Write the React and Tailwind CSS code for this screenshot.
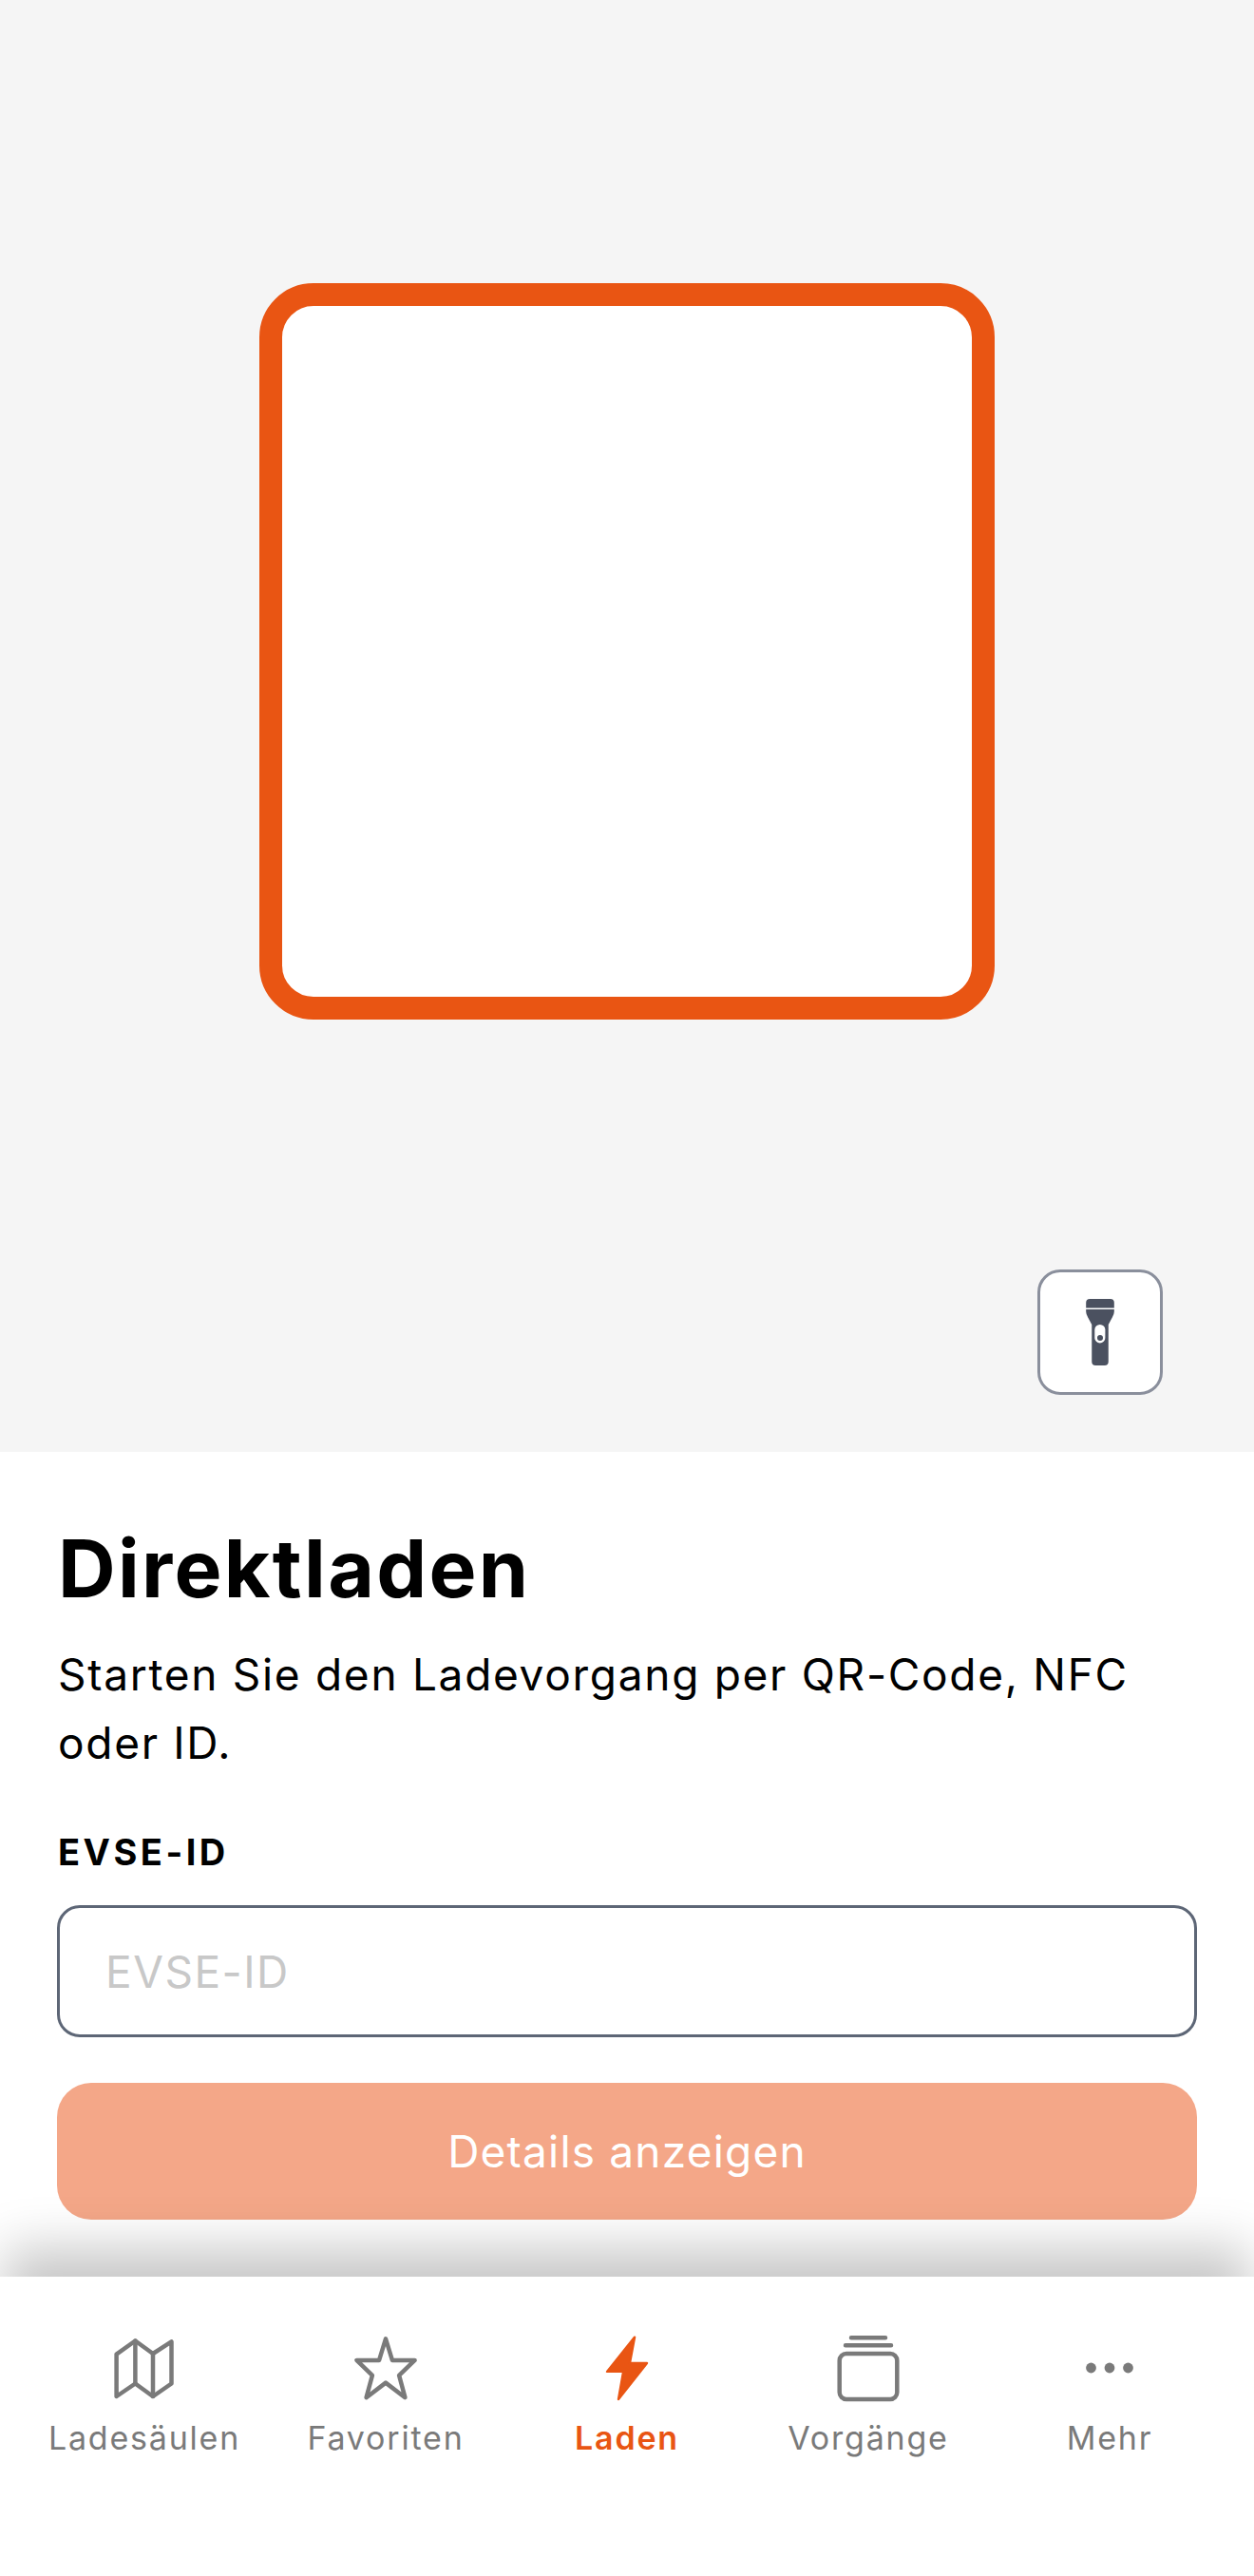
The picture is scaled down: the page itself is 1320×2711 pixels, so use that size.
function MapIcon() {
  return (
    <svg width="72" height="72" viewBox="0 0 24 24" fill="none" stroke="#7a7a7a" strokeWidth="1.5" strokeLinejoin="round" strokeLinecap="round">
      <path d="M2.2 7.2 L8.8 2.5 L15 7 L21.5 2.8 V17.5 L15 22 L8.8 17.5 L2.2 22 Z" />
      <path d="M8.8 2.5 V17.5 M15 7 V22" />
    </svg>
  )
}

function StarIcon() {
  return (
    <svg width="72" height="72" viewBox="0 0 24 24" fill="none" stroke="#7a7a7a" strokeWidth="1.5" strokeLinejoin="round">
      <path d="M12 1.8 L14.3 9.3 L22.2 9.3 L16.7 14.6 L18.8 22.4 L12 17.2 L5.2 22.4 L7.3 14.6 L1.8 9.3 L9.7 9.3 Z" />
    </svg>
  )
}

function BoltIcon() {
  return (
    <svg width="72" height="72" viewBox="0 0 24 24" fill="#e95513" stroke="#e95513" strokeWidth="0.8" strokeLinejoin="round">
      <path d="M14.7 1.2 L5 13.3 L10.7 13.3 L9 23 L19 10.3 L13 10.3 Z" />
    </svg>
  )
}

function StackIcon() {
  return (
    <svg width="72" height="72" viewBox="0 0 24 24" fill="none" stroke="#7a7a7a" strokeWidth="1.5" strokeLinecap="round">
      <rect x="1.9" y="7" width="20.2" height="16" rx="2.4" />
      <path d="M6 1.4 H18 M4 4.1 H20" />
    </svg>
  )
}

function DotsIcon() {
  return (
    <svg width="72" height="72" viewBox="0 0 24 24" fill="#7a7a7a">
      <circle cx="5.5" cy="12" r="1.8" />
      <circle cx="12" cy="12" r="1.8" />
      <circle cx="18.5" cy="12" r="1.8" />
    </svg>
  )
}

function FlashlightIcon() {
  return (
    <svg width="30" height="70" viewBox="0 0 88 208" fill="#4b5160">
      <path d="M0 28 V12 Q0 0 12 0 H76 Q88 0 88 12 V28 Z" />
      <path d="M0 33 H88 V40 Q88 48 82 58 L70 80 V196 Q70 208 58 208 H30 Q18 208 18 196 V80 L6 58 Q0 48 0 40 Z" />
      <rect x="27" y="80" width="33" height="58" rx="16.5" fill="#ffffff" />
      <circle cx="44" cy="122" r="9" />
    </svg>
  )
}

function NavItem({ icon, label, active }) {
  return (
    <div className="flex flex-col items-center">
      <div className="h-[72px] w-[72px]">{icon}</div>
      <span
        className={
          active
            ? 'mt-[16px] text-[34px] leading-[44px] tracking-[1.8px] font-semibold text-[#e95513]'
            : 'mt-[16px] text-[34px] leading-[44px] tracking-[1.8px] text-[#7a7a7a]'
        }
      >
        {label}
      </span>
    </div>
  )
}

export default function App() {
  return (
    <div className="flex h-[2711px] w-[1320px] flex-col bg-white font-['Inter',sans-serif]">
      <div className="flex h-[1528px] flex-col items-center bg-[#f5f5f5] pt-[298px]">
        <div className="h-[775px] w-[774px] rounded-[57px] border-[24px] border-[#e95513] bg-white" />
        <button className="mt-[263px] mr-[96px] flex h-[132px] w-[132px] items-center justify-center self-end rounded-[24px] border-[3px] border-[#8a8f9c] bg-white">
          <FlashlightIcon />
        </button>
      </div>

      <div className="flex flex-1 flex-col px-[60px] pt-[73px]">
        <h1 className="ml-[1px] text-[84px] leading-[100px] font-bold tracking-[2.3px] text-black">Direktladen</h1>
        <p className="mt-[25px] ml-[1px] text-[46px] leading-[72px] tracking-[1.7px] text-black">
          Starten Sie den Ladevorgang per QR-Code, NFC oder ID.
        </p>
        <label className="mt-[54px] ml-[1px] text-[38px] leading-[50px] font-bold tracking-[3.5px] text-black">EVSE-ID</label>
        <input
          placeholder="EVSE-ID"
          className="mt-[31px] h-[139px] w-full rounded-[24px] border-[3px] border-[#5d6676] bg-white px-[48px] text-[46px] tracking-[1.5px] outline-none placeholder:text-[#c8c8c8]"
        />
        <button className="mt-[48px] h-[144px] w-full rounded-[36px] bg-[#f4a788] text-[46px] tracking-[1.2px] text-white">
          Details anzeigen
        </button>
      </div>

      <nav className="relative grid h-[315px] grid-cols-5 bg-white px-[25px] pt-[60px] shadow-[0_-35px_50px_-5px_rgba(0,0,0,0.22)]">
        <NavItem icon={<MapIcon />} label="Ladesäulen" />
        <NavItem icon={<StarIcon />} label="Favoriten" />
        <NavItem icon={<BoltIcon />} label="Laden" active />
        <NavItem icon={<StackIcon />} label="Vorgänge" />
        <NavItem icon={<DotsIcon />} label="Mehr" />
      </nav>
    </div>
  )
}
